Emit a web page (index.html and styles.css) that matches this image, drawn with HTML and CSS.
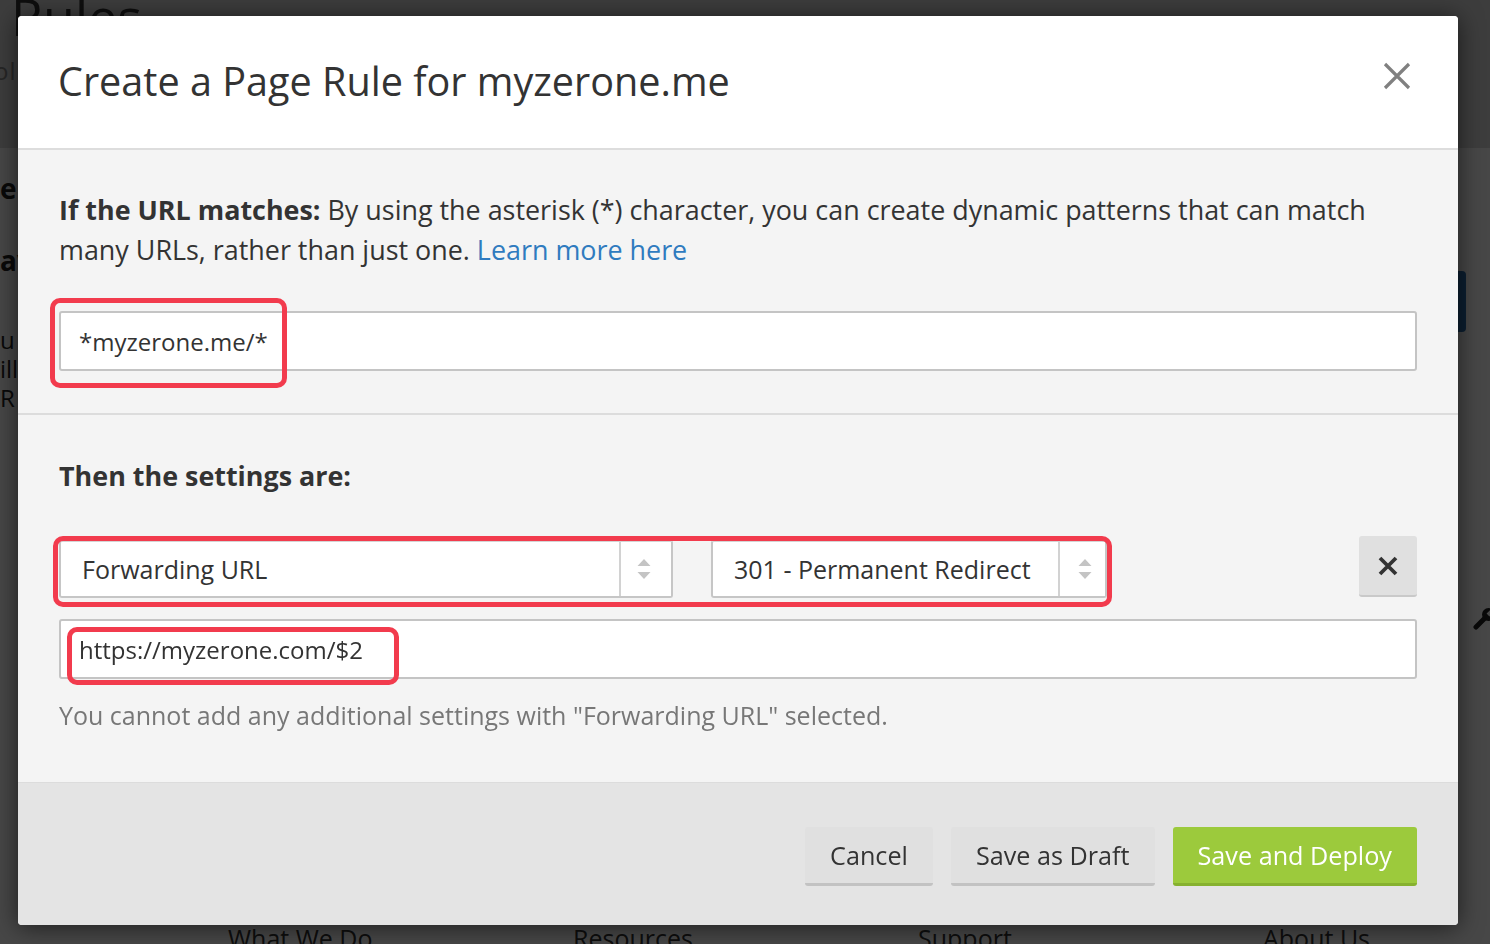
FILE: index.html
```html
<!DOCTYPE html>
<html lang="en">
<head>
<meta charset="utf-8">
<title>Page Rules</title>
<link rel="stylesheet" href="styles.css">
</head>
<body>
<div class="page">
  <header class="page-head">
    <h1 class="page-title">Rules</h1>
    <div class="crumb">ol|</div>
  </header>
  <main class="page-main">
    <div class="side-left">
      <div class="frag-bold frag-e">e</div>
      <div class="frag-bold frag-av">av</div>
      <div class="frag-text">u<br>ill<br>R</div>
    </div>
    <div class="side-right">
      <div class="blue-btn"></div>
      <svg class="wrench" width="24" height="24" viewBox="0 0 24 24"><path d="M3 21 L12 12" stroke="#222" stroke-width="5" stroke-linecap="round"/><circle cx="15.5" cy="8.5" r="6.5" fill="#222"/><path d="M15 9 L24 0" stroke="#fff" stroke-width="4"/></svg>
    </div>
  </main>
  <footer class="page-foot">
    <div class="foot-col">What We Do</div>
    <div class="foot-col">Resources</div>
    <div class="foot-col">Support</div>
    <div class="foot-col foot-last">About Us</div>
  </footer>
</div>
<div class="overlay"></div>

<div class="modal">
  <div class="modal-head">
    <h2 class="modal-title">Create a Page Rule for myzerone.me</h2>
    <button class="close-btn" aria-label="Close"><svg width="28" height="28" viewBox="0 0 28 28"><path d="M2 2L26 26M26 2L2 26" stroke="#808080" stroke-width="3.2"/></svg></button>
  </div>
  <div class="modal-body">
    <section class="rule-section match-section">
      <p class="intro"><strong>If the URL matches:</strong> By using the asterisk (*) character, you can create dynamic patterns that can match many URLs, rather than just one. <a class="link" href="#">Learn more here</a></p>
      <div class="field url-field">*myzerone.me/*</div>
    </section>
    <section class="rule-section settings-section">
      <h3 class="settings-title">Then the settings are:</h3>
      <div class="setting-row">
        <div class="select-group">
          <div class="select sel-setting">
            <span class="select-value">Forwarding URL</span>
            <span class="select-arrows"><svg width="14" height="22" viewBox="0 0 14 22"><path d="M7 1L13.5 8H0.5Z M0.5 14H13.5L7 21Z" fill="#c4c4c4"/></svg></span>
          </div>
          <div class="select sel-code">
            <span class="select-value">301 - Permanent Redirect</span>
            <span class="select-arrows"><svg width="14" height="22" viewBox="0 0 14 22"><path d="M7 1L13.5 8H0.5Z M0.5 14H13.5L7 21Z" fill="#c4c4c4"/></svg></span>
          </div>
        </div>
        <button class="remove-btn" aria-label="Remove"><svg width="20" height="20" viewBox="0 0 20 20"><path d="M2 2L18 18M18 2L2 18" stroke="#333" stroke-width="3.8"/></svg></button>
      </div>
      <div class="field dest-field">https://myzerone.com/$2</div>
      <p class="help">You cannot add any additional settings with "Forwarding URL" selected.</p>
    </section>
  </div>
  <div class="modal-foot">
    <button class="btn">Cancel</button>
    <button class="btn">Save as Draft</button>
    <button class="btn btn-primary">Save and Deploy</button>
  </div>
  <span class="mark mark-1"></span>
  <span class="mark mark-2"></span>
  <span class="mark mark-3"></span>
</div>
</body>
</html>
```

FILE: styles.css
```css
* { box-sizing: border-box; }
html, body { margin: 0; padding: 0; }
body {
  width: 1490px;
  height: 944px;
  overflow: hidden;
  position: relative;
  background: #fff;
  color: #333;
  font-family: "Open Sans", "Liberation Sans", sans-serif;
}

/* underlying page */
.page { height: 944px; display: flex; flex-direction: column; overflow: hidden; }
.page-head { height: 148px; flex: none; background: #d9d9d9; }
.page-title {
  margin: -10px 0 0 0;
  padding-left: 11px;
  font-size: 52px;
  line-height: 52px;
  font-weight: 400;
  color: #333;
}
.crumb { margin: 12px 0 0 -6px; font-size: 24px; color: #888; letter-spacing: 1px; }
.page-main { flex: 1; display: flex; justify-content: space-between; background: #fff; }
.side-left { width: 22px; color: #222; }
.frag-bold { font-weight: 700; font-size: 28px; line-height: 28px; }
.frag-e { margin-top: 26px; }
.frag-av { margin-top: 44px; }
.frag-text { margin-top: 51px; font-size: 24px; line-height: 29px; }
.side-right { width: 32px; }
.blue-btn {
  margin-top: 123px;
  margin-left: -40px;
  width: 48px;
  height: 61px;
  background: #2d6fb0;
  border-radius: 4px;
}
.wrench { display: block; margin: 274px 0 0 15px; }
.page-foot { height: 24px; flex: none; display: flex; padding-left: 228px; background: #fff; overflow: hidden; }
.foot-col { flex: none; width: 345px; font-size: 25px; line-height: 36px; color: #333; }
.foot-col.foot-last { width: auto; flex: 1; }

.overlay { position: fixed; inset: 0; background: rgba(0, 0, 0, 0.72); }

/* modal */
.modal {
  position: absolute;
  left: 18px;
  top: 16px;
  width: 1440px;
  height: 909px;
  display: flex;
  flex-direction: column;
  background: #f4f4f4;
  border-radius: 4px;
  overflow: hidden;
  box-shadow: 0 2px 24px rgba(0, 0, 0, 0.6);
}
.modal-head {
  height: 134px;
  flex: none;
  display: flex;
  justify-content: space-between;
  align-items: flex-start;
  padding: 37px 47px 0 40px;
  background: #fff;
  border-bottom: 2px solid #dddddd;
}
.modal-title { margin: 0; font-size: 39.6px; font-weight: 400; line-height: 57px; color: #333; }
.close-btn { margin-top: 9px; padding: 0; border: 0; background: none; display: block; }
.close-btn svg { display: block; }

.modal-body { flex: 1; background: #f4f4f4; }
.rule-section { padding-left: 41px; padding-right: 41px; }
.match-section { padding-top: 40px; padding-bottom: 42px; border-bottom: 2px solid #dcdcdc; }
.intro { margin: 0; font-size: 26.9px; line-height: 40px; color: #333; }
.intro strong { font-weight: 700; }
.link { color: #2f7bbf; text-decoration: none; }

.field {
  height: 60px;
  display: flex;
  align-items: center;
  padding-left: 18px;
  background: #fff;
  border: 2px solid #c4c4c4;
  border-radius: 3px;
  font-size: 24px;
  color: #333;
}
.url-field { margin-top: 41px; }

.settings-section { padding-top: 41px; padding-bottom: 47px; }
.settings-title { margin: 0; font-size: 26.9px; line-height: 40px; font-weight: 700; color: #333; }
.setting-row { margin-top: 40px; display: flex; justify-content: space-between; align-items: flex-start; }
.select-group { display: flex; gap: 38px; margin-top: 4px; }
.select {
  height: 58px;
  display: flex;
  background: #fff;
  border: 2px solid #c6c6c6;
  border-top-color: #d4d4d4;
  border-radius: 3px;
}
.sel-setting { width: 614px; }
.sel-code { width: 396px; }
.select-value { flex: 1; display: flex; align-items: center; padding-left: 21px; font-size: 25px; color: #333; }
.select-arrows {
  display: flex;
  align-items: center;
  justify-content: center;
  border-left: 2px solid #d2d2d2;
}
.sel-setting .select-arrows { width: 52px; padding-right: 5px; }
.sel-code .select-arrows { width: 47px; padding-left: 4px; }
.select-arrows svg { display: block; }
.remove-btn {
  width: 58px;
  height: 61px;
  padding: 0;
  display: flex;
  align-items: center;
  justify-content: center;
  background: #e0e0e0;
  border: 0;
  border-bottom: 2px solid #c9c9c9;
  border-radius: 3px;
}
.remove-btn svg { display: block; }
.dest-field { margin-top: 21px; }
.help { margin: 16px 0 0; font-size: 25px; line-height: 40px; color: #777; }

.modal-foot {
  height: 143px;
  flex: none;
  display: flex;
  justify-content: flex-end;
  align-items: flex-start;
  gap: 18px;
  padding: 44px 41px 0;
  background: #e4e4e4;
  border-top: 1px solid #dcdcdc;
}
.btn {
  height: 59px;
  padding: 0 25px;
  font-family: "Open Sans", "Liberation Sans", sans-serif;
  font-size: 25.2px;
  color: #333;
  background: #e0e0e0;
  border: 0;
  border-bottom: 3px solid #c2c2c2;
  border-radius: 3px;
}
.btn-primary { background: #9cca3c; border-bottom-color: #86b12f; color: #fff; }

/* annotation highlights */
.mark {
  position: absolute;
  border: 5px solid #f23b4d;
  border-radius: 10px;
  pointer-events: none;
}
.mark-1 { left: 32px; top: 282px; width: 237px; height: 90px; }
.mark-2 { left: 35px; top: 520px; width: 1059px; height: 71px; }
.mark-3 { left: 49px; top: 611px; width: 332px; height: 58px; }
```
